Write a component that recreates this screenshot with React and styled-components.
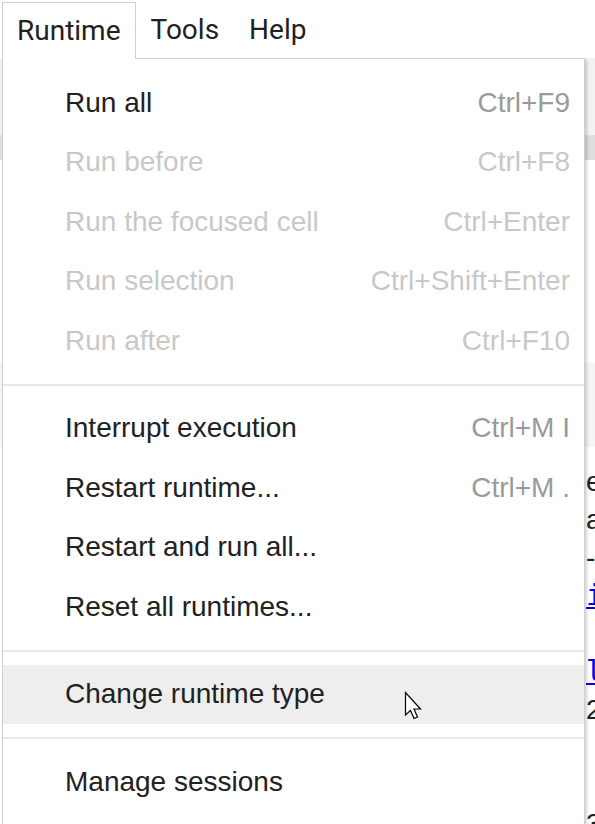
import React from "react";
import styled, { createGlobalStyle } from "styled-components";

const Global = createGlobalStyle`
  html, body { margin: 0; padding: 0; background: #fff; }
  body { font-family: "Liberation Sans", Arial, sans-serif; }
`;

const Page = styled.div`
  position: relative;
  width: 595px;
  height: 824px;
  overflow: hidden;
  background: #fff;
`;

const MenuBar = styled.div`
  display: flex;
  align-items: stretch;
  height: 56px;
  padding: 2px 0 0 2px;
  font-family: Roboto, "Liberation Sans", sans-serif;
  font-size: 28px;
  color: #212121;
`;

const MenuButton = styled.div`
  position: relative;
  z-index: ${(p) => (p.$open ? 3 : 1)};
  display: flex;
  align-items: center;
  padding: 0 14px 2px;
  height: ${(p) => (p.$open ? "57px" : "56px")};
  box-sizing: border-box;
  border: 1px solid ${(p) => (p.$open ? "#cfcfcf" : "transparent")};
  border-bottom: none;
  background: ${(p) => (p.$open ? "#fff" : "transparent")};
`;

const Workspace = styled.div`
  display: flex;
  height: 766px;
`;

const Gutter = styled.div`
  width: 2px;
  background: #d6d6d6;
  display: flex;
  flex-direction: column;
`;

const Mark = styled.div`
  height: ${(p) => p.$h}px;
  margin-top: ${(p) => p.$top}px;
  background: ${(p) => p.$c};
`;

const Main = styled.div`
  flex: 1;
  display: flex;
  flex-direction: column;
`;

const Band = styled.div`
  height: ${(p) => p.$h}px;
  background: ${(p) => p.$bg};
  flex-shrink: 0;
`;

const TextCell = styled.div`
  display: flex;
  flex-direction: column;
  padding-left: 586px;
  font-family: "Liberation Sans", Arial, sans-serif;
  font-size: 28px;
  color: #222;
  white-space: nowrap;
`;

const Line = styled.div`
  height: 38px;
  line-height: 38px;
  color: ${(p) => (p.$link ? "#0000ee" : "#222")};
  text-decoration: ${(p) => (p.$link ? "underline" : "none")};
  font-family: ${(p) =>
    p.$link ? '"DejaVu Sans Mono", monospace' : '"Liberation Sans", Arial, sans-serif'};
`;

const Dropdown = styled.div`
  position: absolute;
  z-index: 2;
  top: 58px;
  left: 2px;
  width: 583px;
  box-sizing: border-box;
  padding: 14px 0 40px;
  background: #fff;
  border: 1px solid #cfcfcf;
  box-shadow: 2px 2px 3px rgba(0, 0, 0, 0.18);
  font-family: "Liberation Sans", Arial, sans-serif;
  font-size: 28px;
`;

const Item = styled.div`
  display: flex;
  justify-content: space-between;
  align-items: center;
  height: 59.5px;
  padding: 0 14px 0 62px;
  background: ${(p) => (p.$hover ? "#eeeeee" : "transparent")};
  color: ${(p) => (p.$disabled ? "#c8c8c8" : "#212121")};
  white-space: nowrap;
`;

const Shortcut = styled.span`
  color: ${(p) => (p.$disabled ? "#c8c8c8" : "#9a9a9a")};
`;

const Separator = styled.div`
  height: 2px;
  margin: 13px 0;
  background: #e8e8e8;
`;

const Cursor = styled.svg`
  position: absolute;
  z-index: 5;
  left: 404px;
  top: 691px;
`;

const groups = [
  [
    ["Run all", "Ctrl+F9", false],
    ["Run before", "Ctrl+F8", true],
    ["Run the focused cell", "Ctrl+Enter", true],
    ["Run selection", "Ctrl+Shift+Enter", true],
    ["Run after", "Ctrl+F10", true],
  ],
  [
    ["Interrupt execution", "Ctrl+M I", false],
    ["Restart runtime...", "Ctrl+M .", false],
    ["Restart and run all...", "", false],
    ["Reset all runtimes...", "", false],
  ],
  [["Change runtime type", "", false, true]],
  [["Manage sessions", "", false]],
];

export default function App() {
  return (
    <Page>
      <Global />
      <MenuBar>
        <MenuButton $open>Runtime</MenuButton>
        <MenuButton>Tools</MenuButton>
        <MenuButton>Help</MenuButton>
      </MenuBar>
      <Workspace>
        <Gutter>
          <Mark $top={34} $h={14} $c="#9a9a9a" />
          <Mark $top={130} $h={8} $c="#333" />
          <Mark $top={130} $h={4} $c="#555" />
          <Mark $top={180} $h={30} $c="#333" />
          <Mark $top={60} $h={20} $c="#888" />
        </Gutter>
        <Main>
          <Band $h={77} $bg="#f2f2f2" />
          <Band $h={25} $bg="#dedede" />
          <Band $h={203} $bg="#fff" />
          <Band $h={84} $bg="#f5f5f5" />
          <Band $h={16} $bg="#fff" />
          <TextCell>
            <Line>e</Line>
            <Line>a</Line>
            <Line>-</Line>
            <Line $link>i</Line>
            <Line>&nbsp;</Line>
            <Line $link>l</Line>
            <Line>2</Line>
            <Line>&nbsp;</Line>
            <Line>&nbsp;</Line>
            <Line>3</Line>
          </TextCell>
        </Main>
      </Workspace>
      <Dropdown>
        {groups.map((g, gi) => (
          <React.Fragment key={gi}>
            {gi > 0 && <Separator />}
            {g.map(([label, sc, dis, hover]) => (
              <Item key={label} $disabled={dis} $hover={hover}>
                <span>{label}</span>
                {sc && <Shortcut $disabled={dis}>{sc}</Shortcut>}
              </Item>
            ))}
          </React.Fragment>
        ))}
      </Dropdown>
      <Cursor width="20" height="30" viewBox="0 0 20 30">
        <path
          d="M1.5 1.5 L1.5 24 L6.5 19.5 L10 27.5 L13.5 26 L10 18 L16.5 18 Z"
          fill="#fff"
          stroke="#000"
          strokeWidth="1.2"
          strokeLinejoin="miter"
        />
      </Cursor>
    </Page>
  );
}
